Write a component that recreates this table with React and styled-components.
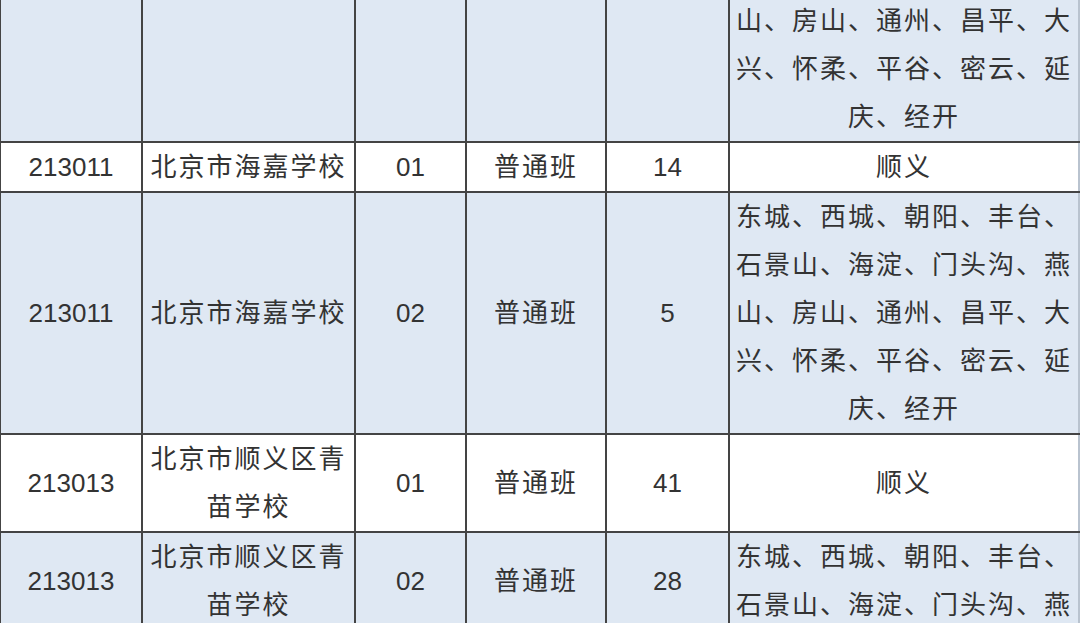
import React from 'react'
import styled, { createGlobalStyle } from 'styled-components'

const Global = createGlobalStyle`
  html, body {
    margin: 0;
    padding: 0;
    background: #ffffff;
    overflow: hidden;
  }
`

const Page = styled.div`
  width: 1080px;
  height: 623px;
  overflow: hidden;
`

const Table = styled.table`
  border-collapse: collapse;
  table-layout: fixed;
  width: 1079px;
  margin: -101px 0 0 -1px;
  font-family: "Liberation Sans", "Noto Sans CJK SC", sans-serif;
  font-size: 26px;
  color: #333333;
`

const Col = styled.col`
  width: ${p => p.w}px;
`

const Row = styled.tr`
  background: ${p => (p.shaded ? '#dfe8f3' : '#ffffff')};
  vertical-align: ${p => (p.top ? 'top' : 'middle')};
`

const Cell = styled.td`
  border: 2px solid #444444;
  padding: 0 4px;
  line-height: 48px;
  text-align: center;
  letter-spacing: ${p => (p.cjk ? '2px' : '0')};
  &:last-child {
    border-right-color: #b9c3cf;
  }
`

// fixed-height content box, used where the row continues past the picture
const Fill = styled.div`
  height: ${p => p.h}px;
  display: flex;
  align-items: center;
  justify-content: center;
`

const AREAS = '东城、西城、朝阳、丰台、石景山、海淀、门头沟、燕山、房山、通州、昌平、大兴、怀柔、平谷、密云、延庆、经开'

const rows = [
  { id: '', school: '', cls: '', type: '', num: '', area: AREAS, shaded: true },
  { id: '213011', school: '北京市海嘉学校', cls: '01', type: '普通班', num: '14', area: '顺义', shaded: false },
  { id: '213011', school: '北京市海嘉学校', cls: '02', type: '普通班', num: '5', area: AREAS, shaded: true },
  { id: '213013', school: '北京市顺义区青苗学校', cls: '01', type: '普通班', num: '41', area: '顺义', shaded: false },
  { id: '213013', school: '北京市顺义区青苗学校', cls: '02', type: '普通班', num: '28', area: AREAS, shaded: true, fill: 96 },
]

const App = () => {
  return (
    <Page>
      <Global />
      <Table>
        <colgroup>
          <Col w={142} />
          <Col w={213} />
          <Col w={111} />
          <Col w={140} />
          <Col w={123} />
          <Col w={350} />
        </colgroup>
        <tbody>
          {rows.map((r, i) => {
            const wrap = v => (r.fill ? <Fill h={r.fill}>{v}</Fill> : v)
            return (
              <Row key={i} shaded={r.shaded} top={!!r.fill}>
                <Cell>{wrap(r.id)}</Cell>
                <Cell cjk>{wrap(r.school)}</Cell>
                <Cell>{wrap(r.cls)}</Cell>
                <Cell cjk>{wrap(r.type)}</Cell>
                <Cell>{wrap(r.num)}</Cell>
                <Cell cjk>{r.area}</Cell>
              </Row>
            )
          })}
        </tbody>
      </Table>
    </Page>
  )
}

export default App
